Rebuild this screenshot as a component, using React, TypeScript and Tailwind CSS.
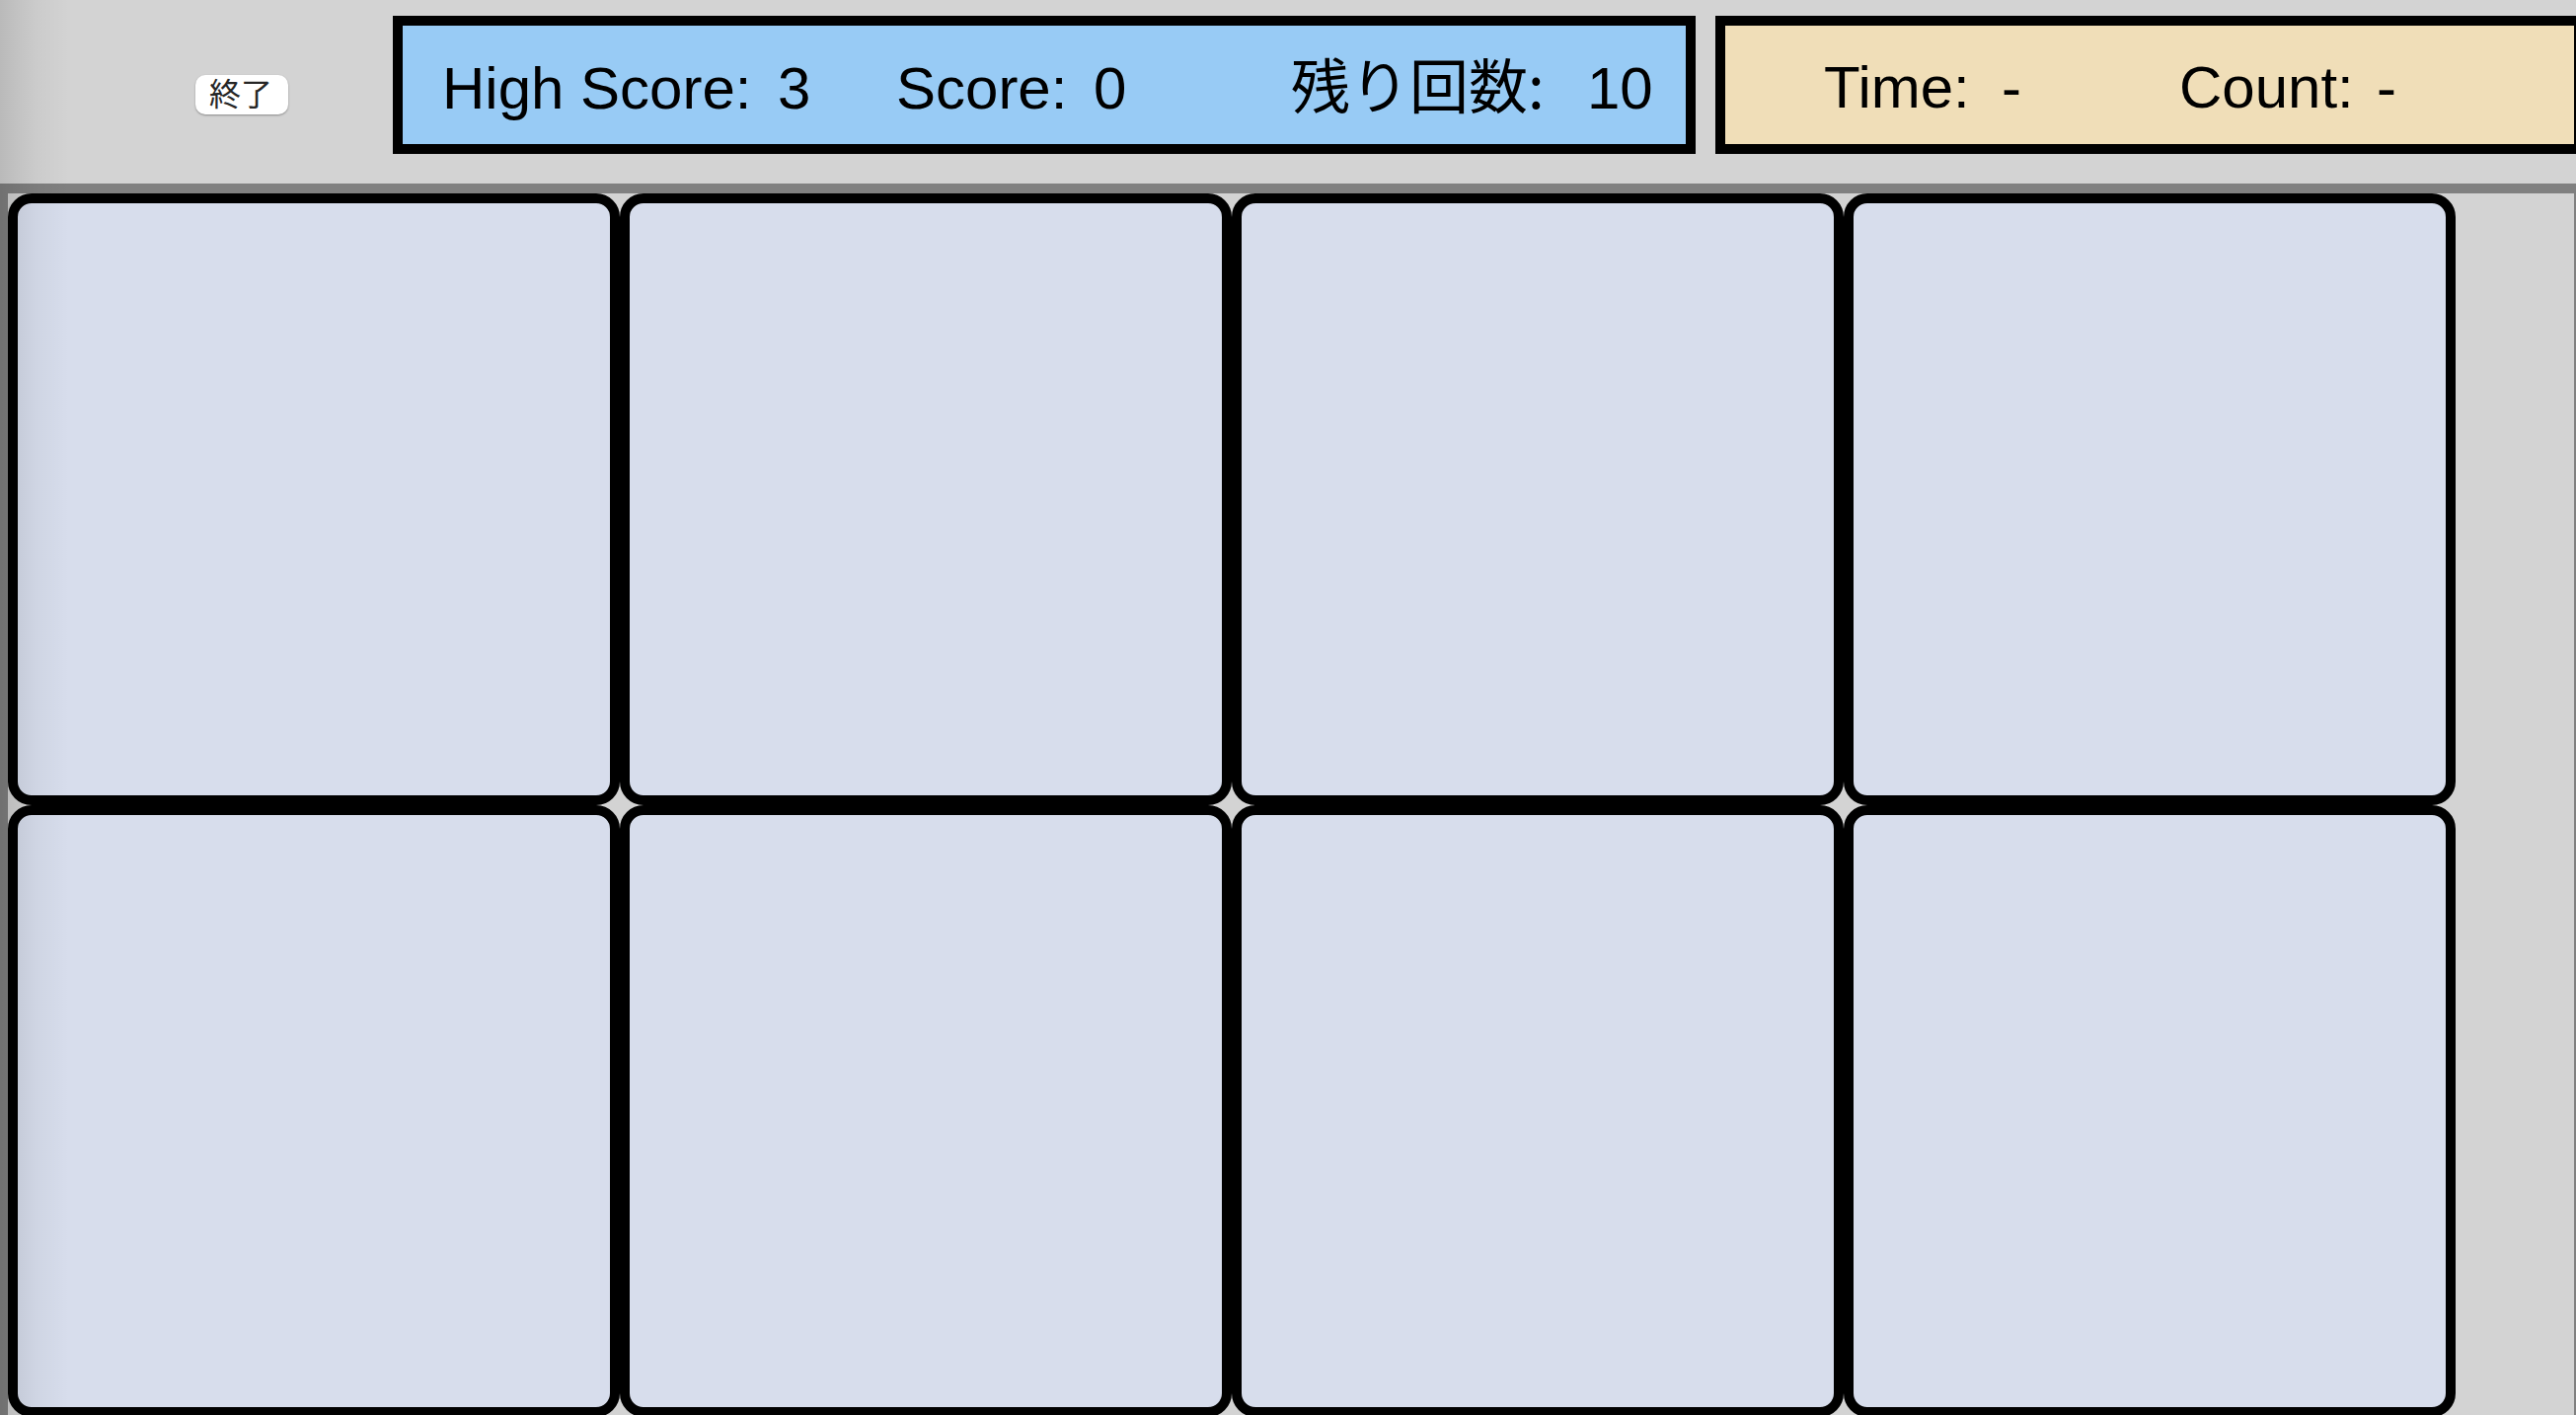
type Stat = { id: string; label: string; value: string; labelClass?: string };

const scoreStats: Stat[] = [
  { id: "high-score", label: "High Score:", value: "3" },
  { id: "score", label: "Score:", value: "0" },
  { id: "remaining", label: "残り回数:", value: "10", labelClass: "font-['Noto_Sans_CJK_JP',sans-serif]" },
];

const roundStats: Stat[] = [
  { id: "time", label: "Time:", value: "-" },
  { id: "count", label: "Count:", value: "-" },
];

const cards = Array.from({ length: 8 }, (_, i) => i + 1);

function Stats({ items }: { items: Stat[] }) {
  return (
    <>
      {items.map((s) => (
        <div key={s.id} className="contents">
          <dt className={`whitespace-nowrap ${s.labelClass ?? ""}`}>{s.label}</dt>
          <dd className="whitespace-nowrap">{s.value}</dd>
        </div>
      ))}
    </>
  );
}

export default function App() {
  return (
    <div className="relative flex h-screen flex-col overflow-hidden bg-[#d3d3d3] font-['Liberation_Sans','Noto_Sans_CJK_JP',sans-serif] text-black">
      <header className="grid shrink-0 grid-cols-[minmax(0,378fr)_minmax(0,1320fr)_minmax(0,872fr)] gap-x-5 pt-4 pb-[30px]">
        <div className="flex items-center justify-end pr-[86px]">
          <button
            type="button"
            className="mt-5 flex h-10 items-start rounded-[10px] bg-white pr-4 pl-3.5 font-['Noto_Sans_CJK_JP',sans-serif] text-[32px] leading-[34px] whitespace-nowrap text-[#262626] shadow-[0_1px_2px_rgba(0,0,0,0.35)]"
          >
            終了
          </button>
        </div>
        <dl className="grid h-[140px] grid-cols-[minmax(0,34fr)_minmax(0,12fr)_minmax(0,20fr)_minmax(0,20fr)_minmax(0,30fr)_minmax(0,10fr)] items-baseline border-10 border-black bg-[#98cbf5] pt-[14px] pl-10 text-[60px] leading-[88px]">
          <Stats items={scoreStats} />
        </dl>
        <dl className="grid h-[140px] grid-cols-[minmax(0,18fr)_minmax(0,18fr)_minmax(0,20fr)_minmax(0,20fr)] items-baseline border-10 border-r-2 border-black bg-[#f0deb8] pt-[19px] pl-[100px] text-[60px] leading-[88px]">
          <Stats items={roundStats} />
        </dl>
      </header>
      <main className="grow border-t-10 border-r-2 border-l-8 border-[#808080]">
        <div className="grid grid-cols-4 pr-[120px]">
          {cards.map((n) => (
            <button
              key={n}
              type="button"
              aria-label={`Card ${n}`}
              className="aspect-square rounded-3xl border-10 border-black bg-[#d7ddec]"
            />
          ))}
        </div>
      </main>
      <div className="pointer-events-none absolute inset-y-0 left-0 w-[70px] bg-linear-to-r from-black/12 via-black/4 to-transparent" />
    </div>
  );
}
